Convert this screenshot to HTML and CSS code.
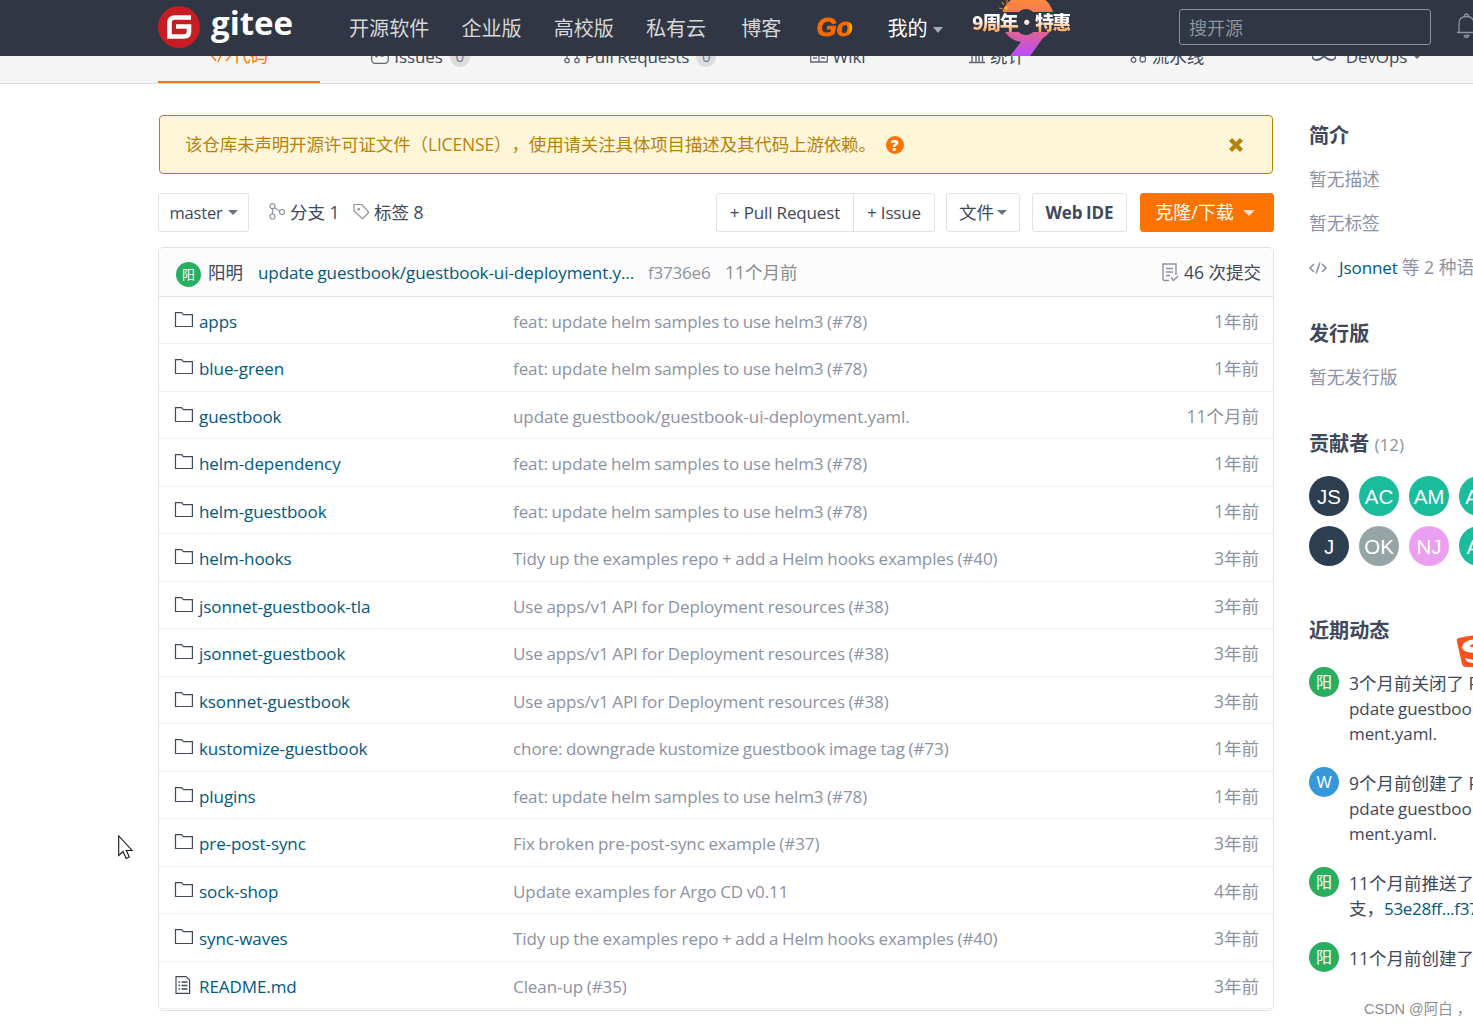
FILE: index.html
```
<!DOCTYPE html>
<html lang="zh-CN">
<head>
    <meta charset="UTF-8">
    <meta name="viewport" content="width=device-width, initial-scale=1.0">
    <title>Gitee</title>
    <link rel="stylesheet" href="styles.css">
</head>
<body>
    <svg class="sprite" width="0" height="0">
        <symbol id="folder" viewBox="0 0 20 18">
            <path d="M1.5 15.5V1.7H7.6L9.4 3.6H18.4V15.5Z" fill="none" stroke="#40485b" stroke-width="1.2"/>
        </symbol>
        <symbol id="file" viewBox="0 0 20 18">
            <path d="M2 .6H12L15.6 4V17.4H2Z" fill="none" stroke="#40485b" stroke-width="1.2"/>
            <path d="M4.5 6h1.6M4.5 9.5h1.6M4.5 13h1.6M7.5 6h6M7.5 9.5h6M7.5 13h6" stroke="#40485b" stroke-width="1.3"/>
        </symbol>
    </svg>

    <header class="header">
        <a class="logo">
            <svg width="42" height="42" viewBox="0 0 42 42">
                <circle cx="21" cy="21" r="21" fill="#c71d23"/>
                <path d="M33 11.5H17Q11.5 11.5 11.5 17V30.5H26Q31 30.5 31 25.5V20.5H18" fill="none" stroke="#fff" stroke-width="4.6"/>
            </svg>
            <span class="logo-text">gitee</span>
        </a>
        <nav class="nav">
            <a>开源软件</a>
            <a>企业版</a>
            <a>高校版</a>
            <a>私有云</a>
            <a class="nav-blog">博客</a>
            <a class="nav-go">Go</a>
            <a class="nav-my">我的<i class="caret"></i></a>
        </nav>
        <a class="promo">
            <svg width="54" height="56" viewBox="0 0 54 56">
                <defs>
                    <linearGradient id="nine" x1="0" y1="0" x2="0" y2="1">
                        <stop offset="0" stop-color="#ff9030"/>
                        <stop offset=".45" stop-color="#f06a6a"/>
                        <stop offset="1" stop-color="#b84cff"/>
                    </linearGradient>
                </defs>
                <path d="M27 -4A22 23 0 0 0 22 42L11 56H31L44 38A22 23 0 0 0 27 -4ZM27 9A11 13 0 0 1 27 35A11 13 0 0 1 27 9Z" fill="url(#nine)" fill-rule="evenodd"/>
                <path d="M0 12H54V32H0Z" fill="#303643"/>
                <path d="M0 12L-3 13M0 8L4 9M3 2L5 5M8 0V4M12 2L10 5" stroke="#e8743a" stroke-width="1.2"/>
                <circle cx="7" cy="8" r="1.5" fill="#ffd400"/>
            </svg>
            <span>9周年·特惠</span>
        </a>
        <div class="search">搜开源</div>
        <svg class="bell" width="22" height="26" viewBox="0 0 22 26">
            <path d="M1 19.5H21M3 19V11Q3 3.5 10.5 3.5T18 11V19M8.5 3Q8.5 1 10.5 1T12.5 3M8 22.5H13Q12.5 24.5 10.5 24.5T8 22.5" fill="none" stroke="#8d93a3" stroke-width="1.3"/>
        </svg>
    </header>

    <nav class="tabs">
        <a class="tab tab-code"><svg width="22" height="16" viewBox="0 0 22 16"><path d="M6 2L1 8L6 14M14 1L8 15M16 2L21 8L16 14" fill="none" stroke="#fe7300" stroke-width="1.3"/></svg>代码</a>
        <a class="tab tab-issues"><svg width="18" height="16" viewBox="0 0 18 16"><rect x=".7" y=".7" width="16.6" height="14.6" rx="3.5" fill="none" stroke="#5f6778" stroke-width="1.3"/><circle cx="5.5" cy="8" r="1.5" fill="#5f6778"/><path d="M9 8H13" stroke="#5f6778" stroke-width="1.3"/></svg><span class="en">Issues</span><b class="badge">0</b></a>
        <a class="tab tab-pr"><svg width="16" height="16" viewBox="0 0 16 16"><g fill="none" stroke="#5f6778" stroke-width="1.3"><circle cx="3" cy="12.5" r="2.2"/><circle cx="13" cy="12.5" r="2.2"/><circle cx="3" cy="3" r="2.2"/><path d="M3 5V10M13 10V3H8"/></g></svg><span class="en">Pull Requests</span><b class="badge">0</b></a>
        <a class="tab tab-wiki"><svg width="18" height="14" viewBox="0 0 18 14"><path d="M.7 .7H9V13H.7ZM9 .7H17.3V13H9ZM3 9H7M11 9H15M3 5H7M11 5H15" fill="none" stroke="#5f6778" stroke-width="1.3"/></svg><span class="en">Wiki</span></a>
        <a class="tab tab-stat"><svg width="16" height="15" viewBox="0 0 16 15"><path d="M0 13.5H16M3 13V5M7 13V2M10 13V7M13.5 13V2" fill="none" stroke="#5f6778" stroke-width="1.4"/></svg>统计</a>
        <a class="tab tab-pipe"><svg width="17" height="16" viewBox="0 0 17 16"><g fill="none" stroke="#5f6778" stroke-width="1.3"><circle cx="3.5" cy="12" r="2.3"/><rect x="10" y="8" width="5.5" height="6" rx="2.5"/><path d="M3.5 9.5V2H13V8"/></g></svg>流水线</a>
        <a class="tab tab-devops"><svg width="24" height="12" viewBox="0 0 24 12"><path d="M12 6C9 1 6 1 4.5 1A4.5 4.5 0 0 0 4.5 10C7 10 9 9 12 6C15 9 17 10 19.5 10A4.5 4.5 0 0 0 19.5 1C17 1 15 1 12 6Z" fill="none" stroke="#5f6778" stroke-width="1.8"/></svg><span class="en">DevOps</span><i class="caret"></i></a>
    </nav>

    <div class="page">
        <main class="main">
            <div class="alert">
                <span>该仓库未声明开源许可证文件（LICENSE），使用请关注具体项目描述及其代码上游依赖。</span>
                <b class="help">?</b>
                <svg class="close" width="16" height="16" viewBox="0 0 16 16"><path d="M2.5 2.5L13.5 13.5M13.5 2.5L2.5 13.5" stroke="#b7820c" stroke-width="4.4"/></svg>
            </div>

            <div class="toolbar">
                <a class="btn btn-branch"><span class="en">master</span><i class="caret"></i></a>
                <a class="ref ref-branch"><svg width="17" height="17" viewBox="0 0 17 17"><g fill="none" stroke="#8c92a4" stroke-width="1.2"><circle cx="3.5" cy="3.2" r="2.5"/><circle cx="3.5" cy="13.5" r="2.5"/><circle cx="13" cy="9" r="2.5"/><path d="M3.5 5.7V11M5.5 5L10.8 8"/></g></svg>分支 1</a>
                <a class="ref ref-tag"><svg width="17" height="17" viewBox="0 0 17 17"><path d="M1 1.5H9L15.8 9.5L9.5 15.7L1 8Z" fill="none" stroke="#8c92a4" stroke-width="1.2"/><circle cx="5.8" cy="6.2" r="1.3" fill="#8c92a4"/></svg>标签 8</a>
                <div class="actions">
                    <div class="group">
                        <a class="btn btn-pr"><span class="en">+ Pull Request</span></a>
                        <a class="btn btn-issue"><span class="en">+ Issue</span></a>
                    </div>
                    <a class="btn btn-file">文件<i class="caret"></i></a>
                    <a class="btn btn-ide"><span class="en">Web IDE</span></a>
                    <a class="btn btn-clone">克隆/下载<i class="caret"></i></a>
                </div>
            </div>

            <div class="tree">
                <div class="commit">
                    <b class="avatar avatar-xs green">阳</b>
                    <a class="author">阳明</a>
                    <a class="commit-msg en">update guestbook/guestbook-ui-deployment.y...</a>
                    <span class="sha en">f3736e6</span>
                    <span class="ago">11个月前</span>
                    <a class="count"><svg width="18" height="19" viewBox="0 0 18 19"><path d="M8 17.5H4Q2 17.5 2 15.5V1H15V12M5 5.5H12M5 9H12M5 12.5H9M10 14.5L12.5 17.5L17 13" fill="none" stroke="#8c92a4" stroke-width="1.4"/></svg>46 次提交</a>
                </div>
                <div class="row"><svg><use href="#folder"/></svg><a class="name en">apps</a><span class="msg en">feat: update helm samples to use helm3 (#78)</span><span class="time">1年前</span></div>
                <div class="row"><svg><use href="#folder"/></svg><a class="name en">blue-green</a><span class="msg en">feat: update helm samples to use helm3 (#78)</span><span class="time">1年前</span></div>
                <div class="row"><svg><use href="#folder"/></svg><a class="name en">guestbook</a><span class="msg en">update guestbook/guestbook-ui-deployment.yaml.</span><span class="time">11个月前</span></div>
                <div class="row"><svg><use href="#folder"/></svg><a class="name en">helm-dependency</a><span class="msg en">feat: update helm samples to use helm3 (#78)</span><span class="time">1年前</span></div>
                <div class="row"><svg><use href="#folder"/></svg><a class="name en">helm-guestbook</a><span class="msg en">feat: update helm samples to use helm3 (#78)</span><span class="time">1年前</span></div>
                <div class="row"><svg><use href="#folder"/></svg><a class="name en">helm-hooks</a><span class="msg en">Tidy up the examples repo + add a Helm hooks examples (#40)</span><span class="time">3年前</span></div>
                <div class="row"><svg><use href="#folder"/></svg><a class="name en">jsonnet-guestbook-tla</a><span class="msg en">Use apps/v1 API for Deployment resources (#38)</span><span class="time">3年前</span></div>
                <div class="row"><svg><use href="#folder"/></svg><a class="name en">jsonnet-guestbook</a><span class="msg en">Use apps/v1 API for Deployment resources (#38)</span><span class="time">3年前</span></div>
                <div class="row"><svg><use href="#folder"/></svg><a class="name en">ksonnet-guestbook</a><span class="msg en">Use apps/v1 API for Deployment resources (#38)</span><span class="time">3年前</span></div>
                <div class="row"><svg><use href="#folder"/></svg><a class="name en">kustomize-guestbook</a><span class="msg en">chore: downgrade kustomize guestbook image tag (#73)</span><span class="time">1年前</span></div>
                <div class="row"><svg><use href="#folder"/></svg><a class="name en">plugins</a><span class="msg en">feat: update helm samples to use helm3 (#78)</span><span class="time">1年前</span></div>
                <div class="row"><svg><use href="#folder"/></svg><a class="name en">pre-post-sync</a><span class="msg en">Fix broken pre-post-sync example (#37)</span><span class="time">3年前</span></div>
                <div class="row"><svg><use href="#folder"/></svg><a class="name en">sock-shop</a><span class="msg en">Update examples for Argo CD v0.11</span><span class="time">4年前</span></div>
                <div class="row"><svg><use href="#folder"/></svg><a class="name en">sync-waves</a><span class="msg en">Tidy up the examples repo + add a Helm hooks examples (#40)</span><span class="time">3年前</span></div>
                <div class="row"><svg><use href="#file"/></svg><a class="name en">README.md</a><span class="msg en">Clean-up (#35)</span><span class="time">3年前</span></div>
            </div>
        </main>

        <aside class="side">
            <section class="intro">
                <h3>简介</h3>
                <p>暂无描述</p>
                <p>暂无标签</p>
                <p class="lang"><svg width="18" height="14" viewBox="0 0 18 14"><path d="M5 3L1 7L5 11M11 1.5L7 12.5M13 3L17 7L13 11" fill="none" stroke="#8c92a4" stroke-width="1.6"/></svg><a class="en">Jsonnet</a> 等 2 种语言</p>
            </section>
            <section class="release">
                <h3>发行版</h3>
                <p>暂无发行版</p>
            </section>
            <section class="contributors">
                <h3>贡献者 <small>(12)</small></h3>
                <div class="people">
                    <b class="avatar navy">JS</b><b class="avatar teal">AC</b><b class="avatar teal">AM</b><b class="avatar teal">AS</b>
                    <b class="avatar navy">J</b><b class="avatar gray">OK</b><b class="avatar pink">NJ</b><b class="avatar teal">AL</b>
                </div>
            </section>
            <section class="activity">
                <h3>近期动态</h3>
                <div class="event"><b class="avatar avatar-sm green">阳</b><p>3个月前关闭了 PR<br><span class="en">pdate guestbook/</span><br><span class="en">ment.yaml.</span></p></div>
                <div class="event"><b class="avatar avatar-sm blue">W</b><p>9个月前创建了 PR<br><span class="en">pdate guestbook/</span><br><span class="en">ment.yaml.</span></p></div>
                <div class="event"><b class="avatar avatar-sm green">阳</b><p>11个月前推送了<br>支，<a class="en sha-range">53e28ff...f3736e6</a></p></div>
                <div class="event"><b class="avatar avatar-sm green">阳</b><p>11个月前创建了</p></div>
            </section>
        </aside>
    </div>

    <svg class="ime" width="40" height="36" viewBox="0 0 40 36">
        <path d="M3 4Q0 4 1 8L6 30Q7 33 10 33H40V0Q20 0 3 4Z" fill="#fa541c"/>
        <path d="M22 5Q7 6 6 13Q6 19 22 19M22 10Q14 10 14 12Q14 13 22 13M9 24Q14 26 22 26V29Q10 30 9 24" fill="#fff"/>
        <path d="M22 9Q14 10 14 12T22 13Z" fill="#fa541c"/>
    </svg>
    <svg class="cursor" width="16" height="25" viewBox="0 0 16 25">
        <path d="M.7 1V20.5L5 16.5L8.2 23.5L11.3 22L8.3 15.5H14Z" fill="#fff" stroke="#15161f" stroke-width="1.1"/>
    </svg>
    <div class="watermark">CSDN @阿白 ，</div>
</body>
</html>
```

FILE: styles.css
```
* {
    box-sizing: border-box;
}
body {
    margin: 0;
    width: 1473px;
    height: 1025px;
    overflow: hidden;
    position: relative;
    background: #fff;
    color: #40485b;
    font-family: "Open Sans", "Noto Sans CJK SC", sans-serif;
    font-size: 17.5px;
    line-height: 25px;
    white-space: nowrap;
    text-spacing-trim: space-all;
}
.sprite {
    display: block;
}
svg {
    flex: none;
}
h3, p {
    margin: 0;
}
.en {
    font-size: 17px;
    letter-spacing: -0.08px;
    word-spacing: -0.7px;
}
.caret {
    width: 0;
    height: 0;
    border: 5px solid transparent;
    border-top-color: #6a7182;
    border-bottom: 0;
}

/* header */
.header {
    display: flex;
    align-items: center;
    height: 56px;
    padding-left: 158px;
    background: #303643;
    color: #d6d7d9;
    overflow: hidden;
}
.header > * {
    flex: none;
}
.logo {
    display: flex;
    align-items: center;
    width: 191px;
    height: 54px;
    margin-bottom: 2px;
}
.logo-text {
    margin: -8px 0 0 11px;
    color: #fff;
    font-size: 33px;
    font-weight: 700;
    line-height: 40px;
}
.nav {
    display: flex;
    align-items: center;
    width: 623px;
    font-size: 20.1px;
    gap: 32px;
}
.nav-blog {
    margin-left: 3px;
}
.nav-go {
    width: 38px;
    margin: -2px 0 0 3px;
    background: linear-gradient(90deg, #ff6a00 85%, #ffb000 90%);
    background-clip: text;
    -webkit-background-clip: text;
    color: transparent;
    -webkit-text-stroke: 1px transparent;
    font-family: "Liberation Sans", sans-serif;
    font-size: 26px;
    font-weight: 700;
    font-style: italic;
}
.nav-my {
    display: flex;
    align-items: center;
    gap: 5px;
    margin-left: 1px;
    color: #fff;
}
.nav-my .caret {
    margin-top: 4px;
    border-width: 6px 5.5px 0;
    border-top-color: #a8abb2;
}
.promo {
    position: relative;
    width: 207px;
    height: 56px;
    padding-left: 27px;
}
.promo span {
    position: absolute;
    left: 0;
    top: 9px;
    background: linear-gradient(#fff 45%, #ffa050 90%);
    background-clip: text;
    -webkit-background-clip: text;
    color: transparent;
    font-family: "Noto Sans CJK SC", sans-serif;
    font-size: 19px;
    font-weight: 900;
    letter-spacing: -1.4px;
}
.search {
    width: 252px;
    height: 36px;
    margin-right: 25px;
    margin-bottom: 2px;
    padding: 6px 9px;
    border: 1px solid #8b909c;
    border-radius: 3px;
    color: #8f939b;
    font-size: 18px;
}
.bell {
    margin-bottom: 4px;
}

/* project tabs, partly scrolled under the header */
.tabs {
    display: flex;
    align-items: flex-end;
    height: 28px;
    padding-left: 158px;
    border-bottom: 1px solid #dcdddf;
    background: #f5f5f5;
    overflow: hidden;
}
.tab {
    display: flex;
    flex: none;
    align-items: center;
    justify-content: center;
    gap: 5px;
    height: 54px;
}
.tab-code {
    width: 162px;
    border-bottom: 2px solid #fe7300;
    color: #fe7300;
    gap: 1px;
}
.tab-issues { width: 201px; }
.tab-pr { width: 238px; }
.tab-wiki { width: 157px; }
.tab-stat { width: 162px; }
.tab-pipe { width: 178px; }
.tab-devops { width: 222px; }
.tab-devops .en {
    margin-left: 5px;
}
.badge {
    width: 20px;
    height: 21px;
    margin-left: 2px;
    border-radius: 50%;
    background: #dcdde0;
    color: #6f7890;
    font-size: 15px;
    font-weight: 400;
    line-height: 21px;
    text-align: center;
}

.page {
    display: flex;
    gap: 35px;
    padding: 31px 0 0 158px;
}
.main {
    flex: none;
    width: 1116px;
}

/* licence notice */
.alert {
    display: flex;
    align-items: center;
    height: 59px;
    margin: 0 1px;
    padding: 0 28px 0 25px;
    border: 1px solid #b7820c;
    border-radius: 4px;
    background: #fff6d9;
    color: #b7820c;
    letter-spacing: -0.15px;
}
.help {
    width: 18px;
    height: 18px;
    margin-left: 10px;
    border-radius: 50%;
    background: #fe7300;
    color: #fff;
    font-size: 15px;
    font-weight: 800;
    line-height: 18px;
    text-align: center;
}
.close {
    margin-left: auto;
}

/* toolbar */
.toolbar {
    display: flex;
    align-items: center;
    height: 39px;
    margin-top: 19px;
}
.btn {
    display: flex;
    align-items: center;
    justify-content: center;
    gap: 5px;
    height: 39px;
    border: 1px solid #dce3e8;
    border-radius: 3px;
}
.btn-branch {
    width: 91px;
}
.btn-branch .en {
    font-size: 16.5px;
    letter-spacing: -0.2px;
}
.ref {
    display: flex;
    align-items: center;
    gap: 4px;
}
.ref svg {
    margin-bottom: 3px;
}
.ref-branch {
    width: 84px;
    margin-left: 20px;
}
.actions {
    display: flex;
    margin-left: auto;
}
.group {
    display: flex;
    margin-right: 11px;
}
.btn-pr {
    width: 138px;
    border-radius: 3px 0 0 3px;
}
.btn-issue {
    width: 82px;
    margin-left: -1px;
    border-radius: 0 3px 3px 0;
}
.btn-pr .en,
.btn-issue .en {
    letter-spacing: -0.15px;
    word-spacing: 0;
}
.btn-file {
    width: 74px;
    margin-right: 12px;
    gap: 3px;
}
.btn-ide {
    width: 95px;
    margin-right: 13px;
    font-weight: 700;
}
.btn-clone {
    width: 134px;
    border-color: #fe7300;
    background: #fe7300;
    color: #fff;
    font-size: 18px;
    gap: 9px;
}
.btn-clone .caret {
    margin-right: 4px;
    border-width: 6px 6px 0;
    border-top-color: #ffe0c8;
}

/* file tree */
.tree {
    height: 764px;
    margin-top: 15px;
    border: 1px solid #dce3e8;
    border-radius: 5px;
}
.commit {
    display: flex;
    align-items: center;
    height: 48.5px;
    padding: 1px 12px 0 17px;
    border-bottom: 1px solid #dce3e8;
    border-radius: 5px 5px 0 0;
    background: #fcfcfc;
}
.author {
    width: 50px;
    margin-left: 7px;
}
.commit-msg {
    width: 390px;
    color: #005980;
}
.sha {
    width: 77px;
    color: #8c92a4;
    letter-spacing: -0.2px;
}
.ago {
    color: #8c8c8c;
}
.count {
    display: flex;
    align-items: center;
    gap: 5px;
    margin-left: auto;
}
.row {
    display: flex;
    align-items: center;
    height: 47.5px;
    padding: 3px 14px 0 15px;
    border-bottom: 1px solid #edf1f5;
}
.row svg {
    width: 20px;
    height: 18px;
    margin: 0 5px 3px 0;
}
.name {
    width: 314px;
    color: #005980;
}
.msg {
    color: #8c92a4;
}
.time {
    margin-left: auto;
    color: #8c92a4;
}

/* sidebar */
.side {
    flex: none;
    width: 240px;
    padding-top: 5px;
}
.side h3 {
    padding-top: 1px;
    color: #40485b;
    font-size: 20.1px;
    line-height: 29px;
}
.side h3 small {
    color: #8c92a4;
    font-size: 17px;
    font-weight: 400;
}
.side a {
    color: #005980;
}
.intro,
.release {
    color: #8c92a4;
    font-size: 17.7px;
}
.intro p,
.release p {
    height: 25px;
    margin: 17px 0 19px;
}
.intro {
    height: 198px;
}
.release {
    height: 110px;
}
.intro p + p {
    margin-top: 0;
}
.lang {
    display: flex;
    align-items: center;
    gap: 4px;
}
.lang a {
    margin-left: 8px;
}
.contributors {
    height: 187px;
}
.contributors h3 {
    height: 30px;
}
.people {
    display: flex;
    flex-wrap: wrap;
    width: 200px;
    margin-top: 18px;
    gap: 10px;
}
.avatar {
    display: flex;
    align-items: center;
    justify-content: center;
    flex: none;
    width: 40px;
    height: 40px;
    border-radius: 50%;
    color: #fff;
    font-family: "Liberation Sans", "Noto Sans CJK SC", sans-serif;
    font-size: 20.5px;
    font-weight: 400;
}
.avatar-sm {
    width: 30px;
    height: 30px;
    font-size: 16px;
}
.avatar-xs {
    width: 25px;
    height: 25px;
    margin-top: 5px;
    font-size: 13px;
}
.navy { background: #2c3e50; }
.teal { background: #1abc9c; }
.gray { background: #95a5a6; }
.pink { background: #eb9ff0; }
.green { background: #27ae60; }
.blue { background: #3498db; }
.activity h3 {
    margin-bottom: 22px;
}
.event {
    display: flex;
    gap: 10px;
    margin-bottom: 25px;
}
.event p {
    margin-top: 4px;
    margin-bottom: -4px;
}
.sha-range {
    letter-spacing: -0.3px;
}

/* things floating over the page */
.ime {
    position: absolute;
    left: 1456px;
    top: 634px;
}
.cursor {
    position: absolute;
    left: 118px;
    top: 835px;
}
.watermark {
    position: absolute;
    left: 1364px;
    top: 997px;
    color: #8e8e8e;
    font-family: "Liberation Sans", "Noto Sans CJK SC", sans-serif;
    font-size: 14.5px;
}
```
